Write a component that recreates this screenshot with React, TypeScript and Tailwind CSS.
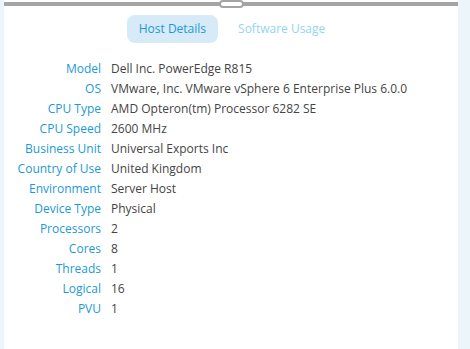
const rows: [string, string][] = [
  ["Model", "Dell Inc. PowerEdge R815"],
  ["OS", "VMware, Inc. VMware vSphere 6 Enterprise Plus 6.0.0"],
  ["CPU Type", "AMD Opteron(tm) Processor 6282 SE"],
  ["CPU Speed", "2600 MHz"],
  ["Business Unit", "Universal Exports Inc"],
  ["Country of Use", "United Kingdom"],
  ["Environment", "Server Host"],
  ["Device Type", "Physical"],
  ["Processors", "2"],
  ["Cores", "8"],
  ["Threads", "1"],
  ["Logical", "16"],
  ["PVU", "1"],
];

export default function App() {
  return (
    <div className="h-[349px] w-[470px] bg-[#ebf5fa] pl-[4px] pr-[12px] overflow-hidden font-['Open_Sans',sans-serif]">
      <div className="relative h-full bg-white">
        {/* resize bar */}
        <div className="pt-[2px]">
          <div className="h-[4px] bg-[#a4a4a4]" />
        </div>
        <div className="absolute left-[215px] top-0 h-[8px] w-[25px] rounded-full border-2 border-[#a4a4a4] bg-white" />

        <div className="flex justify-center gap-[10px] pt-[9px]">
          <button className="h-[28px] rounded-[8px] bg-[#d6eaf7] px-[12px] text-[12px] text-[#1a9ad6]">
            Host Details
          </button>
          <button className="h-[28px] px-[10px] text-[12px] text-[#93d5f0]">Software Usage</button>
        </div>

        <div className="mt-[16px] grid grid-cols-[97px_1fr] gap-x-[10px] text-[12px] leading-[20px]">
          {rows.map(([k, v]) => (
            <div key={k} className="contents">
              <div className="text-right text-[#1a9ad6] whitespace-nowrap">{k}</div>
              <div className="text-[#444] whitespace-nowrap">{v}</div>
            </div>
          ))}
        </div>
      </div>
    </div>
  );
}
